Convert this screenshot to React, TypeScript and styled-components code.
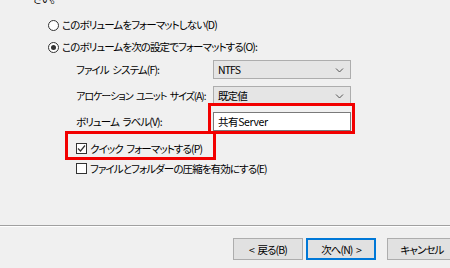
import React from 'react';
import styled, { createGlobalStyle } from 'styled-components';

const GlobalStyle = createGlobalStyle`
  html, body {
    margin: 0;
    padding: 0;
    background: #f0f0f0;
  }
  body {
    font-family: "Noto Sans CJK JP", "Noto Sans", sans-serif;
    font-size: 10.5px;
    letter-spacing: -0.9px;
    word-spacing: 2px;
    color: #000;
  }
`;

const Page = styled.div`
  position: relative;
  width: 450px;
  height: 268px;
  overflow: hidden;
  display: flex;
  flex-direction: column;
  background: #f0f0f0;
  font-feature-settings: 'palt' 1;
`;

const Intro = styled.div`
  margin: -9px 0 0 33px;
  height: 16px;
  line-height: 16px;
`;

const OptionList = styled.div`
  display: flex;
  flex-direction: column;
  gap: 6px;
  padding: 10px 0 0 48px;
`;

const OptionRow = styled.label`
  display: flex;
  align-items: center;
  gap: 3px;
  height: 16px;
  line-height: 16px;
  white-space: nowrap;
`;

const RadioMark = styled.span<{ $checked?: boolean }>`
  box-sizing: border-box;
  width: 11px;
  height: 11px;
  border-radius: 50%;
  border: 1px solid #333;
  background: #fff;
  display: flex;
  align-items: center;
  justify-content: center;

  &::after {
    content: '';
    width: 5px;
    height: 5px;
    border-radius: 50%;
    background: ${p => (p.$checked ? '#333' : 'transparent')};
  }
`;

const SettingsGrid = styled.div`
  display: grid;
  grid-template-columns: 137px 138px;
  grid-auto-rows: 19px;
  row-gap: 7px;
  align-items: center;
  padding-left: 76px;
  margin-top: 5px;
`;

const FieldLabel = styled.div<{ $condensed?: boolean }>`
  white-space: nowrap;
  line-height: 16px;
  font-size: ${p => (p.$condensed ? '10px' : 'inherit')};
  letter-spacing: ${p => (p.$condensed ? '-1px' : 'inherit')};
`;

const Field = styled.div`
  position: relative;
  height: 19px;
`;

const Combo = styled.div`
  box-sizing: border-box;
  height: 19px;
  display: flex;
  align-items: center;
  justify-content: space-between;
  padding: 0 6px 0 4px;
  background: #e5e5e5;
  border: 1px solid #adadad;
`;

const TextInput = styled.div`
  box-sizing: border-box;
  height: 19px;
  display: flex;
  align-items: center;
  padding: 0 4px;
  background: #fff;
  border: 1px solid #7a7a7a;
  letter-spacing: -0.4px;
`;

const Highlight = styled.div<{ $top: number; $right: number; $bottom: number; $left: number }>`
  position: absolute;
  top: ${p => p.$top}px;
  right: ${p => p.$right}px;
  bottom: ${p => p.$bottom}px;
  left: ${p => p.$left}px;
  border: 3px solid #f20000;
  pointer-events: none;
`;

const CheckList = styled.div`
  display: flex;
  flex-direction: column;
  gap: 4px;
  padding-left: 76px;
  margin-top: 9px;
`;

const CheckRow = styled.label`
  position: relative;
  display: flex;
  align-items: center;
  gap: 3px;
  height: 16px;
  white-space: nowrap;
  width: max-content;
`;

const CheckMark = styled.span`
  box-sizing: border-box;
  width: 11px;
  height: 11px;
  border: 1px solid #333;
  background: #fff;
  display: flex;
  align-items: center;
  justify-content: center;
`;

const Spacer = styled.div`
  flex: 1;
`;

const Separator = styled.div`
  height: 1px;
  background: #a0a0a0;
  border-bottom: 1px solid #fff;
`;

const ButtonBar = styled.div`
  display: flex;
  padding: 11px 0 0 233px;
  height: 33px;
  box-sizing: border-box;
  margin-bottom: 8px;
`;

const Button = styled.div<{ $primary?: boolean; $gap?: number }>`
  box-sizing: border-box;
  flex: 0 0 70px;
  height: 22px;
  margin-left: ${p => p.$gap ?? 0}px;
  display: flex;
  align-items: center;
  justify-content: center;
  background: #e1e1e1;
  border: ${p => (p.$primary ? '2px solid #0078d7' : '1px solid #adadad')};
  white-space: nowrap;
`;

const Chevron = () => (
  <svg width="9" height="6" viewBox="0 0 9 6">
    <path d="M1 1.5 L4.5 5 L8 1.5" fill="none" stroke="#555" strokeWidth="1" />
  </svg>
);

const Tick = () => (
  <svg width="9" height="9" viewBox="0 0 9 9">
    <path d="M1 4.5 L3.5 7 L8 1.5" fill="none" stroke="#333" strokeWidth="1.2" />
  </svg>
);

export default function App() {
  return (
    <>
      <GlobalStyle />
      <Page>
        <Intro>さい。</Intro>
        <OptionList>
          <OptionRow>
            <RadioMark />
            このボリュームをフォーマットしない(D)
          </OptionRow>
          <OptionRow>
            <RadioMark $checked />
            このボリュームを次の設定でフォーマットする(O):
          </OptionRow>
        </OptionList>

        <SettingsGrid>
          <FieldLabel>ファイル システム(F):</FieldLabel>
          <Field>
            <Combo>
              NTFS
              <Chevron />
            </Combo>
          </Field>
          <FieldLabel $condensed>アロケーション ユニット サイズ(A):</FieldLabel>
          <Field>
            <Combo>
              既定値
              <Chevron />
            </Combo>
          </Field>
          <FieldLabel>ボリューム ラベル(V):</FieldLabel>
          <Field>
            <TextInput>共有Server</TextInput>
            <Highlight $top={-9} $right={-4} $bottom={-3} $left={-5} />
          </Field>
        </SettingsGrid>

        <CheckList>
          <CheckRow>
            <CheckMark>
              <Tick />
            </CheckMark>
            クイック フォーマットする(P)
            <Highlight $top={-9} $right={-14} $bottom={-4} $left={-11} />
          </CheckRow>
          <CheckRow>
            <CheckMark />
            ファイルとフォルダーの圧縮を有効にする(E)
          </CheckRow>
        </CheckList>

        <Spacer />
        <Separator />
        <ButtonBar>
          <Button>&lt; 戻る(B)</Button>
          <Button $primary $gap={3}>次へ(N) &gt;</Button>
          <Button $gap={11}>キャンセル</Button>
        </ButtonBar>
      </Page>
    </>
  );
}
